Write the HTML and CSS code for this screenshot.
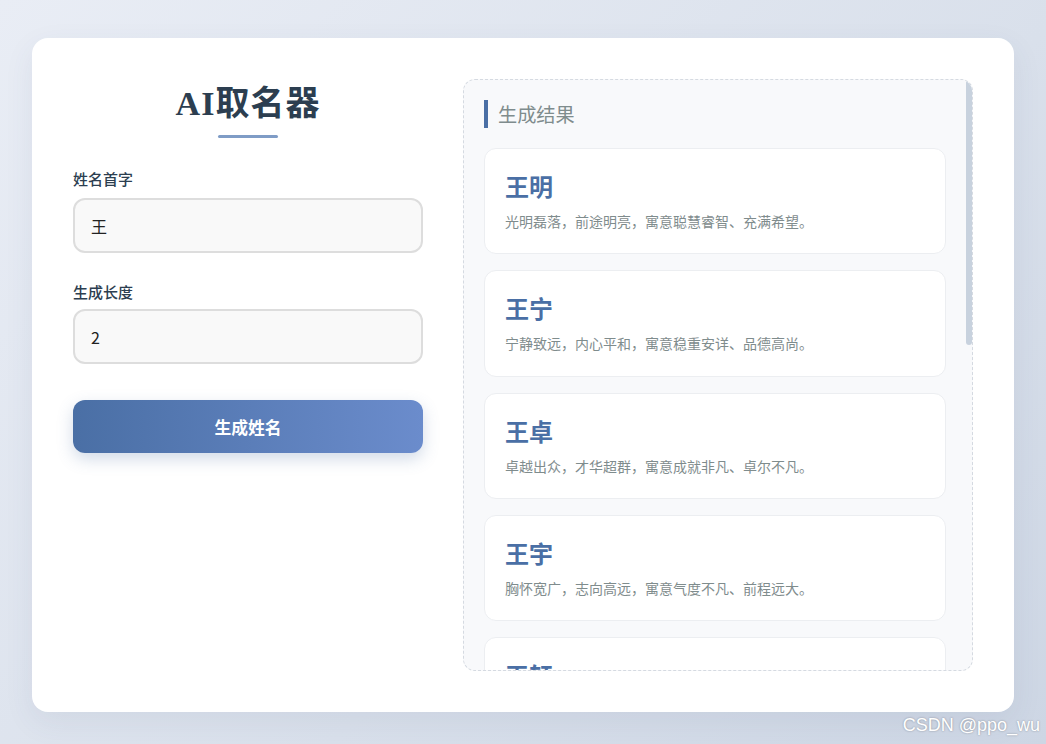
FILE: index.html
```html
<!DOCTYPE html>
<html lang="zh-CN">
<head>
<meta charset="UTF-8">
<title>AI取名器</title>
<link rel="stylesheet" href="styles.css">
</head>
<body>
<div class="app">
  <div class="left">
    <h1 class="title">AI取名器</h1>
    <div class="title-line"></div>
    <div class="field">
      <label class="label">姓名首字</label>
      <div class="input">王</div>
    </div>
    <div class="field">
      <label class="label">生成长度</label>
      <div class="input">2</div>
    </div>
    <button class="btn">生成姓名</button>
  </div>
  <div class="results">
    <div class="results-scroll">
      <h2 class="results-title">生成结果</h2>
      <div class="card"><div class="name">王明</div><div class="desc">光明磊落，前途明亮，寓意聪慧睿智、充满希望。</div></div>
      <div class="card"><div class="name">王宁</div><div class="desc">宁静致远，内心平和，寓意稳重安详、品德高尚。</div></div>
      <div class="card"><div class="name">王卓</div><div class="desc">卓越出众，才华超群，寓意成就非凡、卓尔不凡。</div></div>
      <div class="card"><div class="name">王宇</div><div class="desc">胸怀宽广，志向高远，寓意气度不凡、前程远大。</div></div>
      <div class="card"><div class="name">王轩</div><div class="desc">气宇轩昂，风度翩翩，寓意仪表堂堂、志存高远。</div></div>
      <div class="card"><div class="name">王浩</div><div class="desc">浩然正气，广阔无垠，寓意胸襟开阔、正直坦荡。</div></div>
    </div>
    <div class="scroll-thumb"></div>
  </div>
</div>
<div class="watermark">CSDN @ppo_wu</div>
</body>
</html>
```

FILE: styles.css
```css
* { box-sizing: border-box; }
html, body { height: 100%; }
body {
  margin: 0;
  font-family: "Noto Sans CJK SC", "Noto Sans", sans-serif;
  background: linear-gradient(135deg, #e9edf5 0%, #d9e0eb 60%, #cdd6e4 100%);
  padding: 38px 32px 32px;
  position: relative;
  overflow: hidden;
}
.app {
  width: 982px;
  height: 674px;
  background: #ffffff;
  border-radius: 16px;
  padding: 41px;
  display: grid;
  grid-template-columns: 350px 510px;
  column-gap: 40px;
  box-shadow: 0 10px 30px rgba(60, 80, 120, 0.08);
}
.left { display: flex; flex-direction: column; }
.title {
  margin: 0;
  text-align: center;
  font-family: "Liberation Serif", "Noto Sans CJK SC", serif;
  font-size: 34px;
  font-weight: 700;
  line-height: 50px;
  color: #2c3e50;
  letter-spacing: 1px;
}
.title-line {
  width: 60px;
  height: 3px;
  background: #7f9cc6;
  margin: 6px auto 31px;
  border-radius: 2px;
}
.field { display: flex; flex-direction: column; margin-bottom: 29px; }
.label {
  font-size: 15px;
  font-weight: 500;
  color: #2c3e50;
  line-height: 20px;
  margin-bottom: 9px;
}
.field + .field .label { margin-bottom: 7px; }
.input {
  height: 55px;
  border: 2px solid #dddddd;
  border-radius: 12px;
  background: #f9f9f9;
  padding: 0 16px;
  display: flex;
  align-items: center;
  font-size: 16px;
  color: #222;
}
.btn {
  margin-top: 7px;
  height: 53px;
  border: none;
  border-radius: 12px;
  background: linear-gradient(90deg, #4a6fa5 0%, #6b8ccc 100%);
  color: #fff;
  font-family: "Noto Sans CJK SC", sans-serif;
  font-size: 16.8px;
  font-weight: 700;
  box-shadow: 0 6px 16px rgba(74, 111, 165, 0.25);
}
.results {
  position: relative;
  background: #f8f9fb;
  border: 1px dashed #d5dae1;
  border-radius: 12px;
  height: 592px;
  overflow: hidden;
}
.results-scroll {
  height: 100%;
  overflow: hidden;
  padding: 20px 26px 20px 20px;
}
.scroll-thumb {
  position: absolute;
  top: 0;
  right: 0;
  width: 6px;
  height: 265px;
  background: #c8d2de;
  border-radius: 3px;
}
.results-title {
  margin: 0 0 20px;
  border-left: 4px solid #4a6fa5;
  padding-left: 10px;
  font-size: 19.2px;
  font-weight: 400;
  color: #7f8c8d;
  line-height: 28px;
}
.card {
  background: #fff;
  border: 1px solid #eceef1;
  border-radius: 12px;
  height: 106.3px;
  padding: 22px 20px 0;
  margin-bottom: 16px;
}
.name {
  font-family: "Liberation Serif", "Noto Sans CJK SC", serif;
  font-size: 24px;
  font-weight: 700;
  color: #4a6fa5;
  line-height: 34px;
  margin-bottom: 6px;
}
.desc {
  font-size: 14px;
  color: #7f8c8d;
  line-height: 20px;
}
.watermark {
  position: absolute;
  right: 6px;
  bottom: 8px;
  font-family: "Liberation Sans", sans-serif;
  font-size: 18px;
  color: #fff;
  text-shadow: 0 0 2px rgba(0,0,0,0.35);
}
```
